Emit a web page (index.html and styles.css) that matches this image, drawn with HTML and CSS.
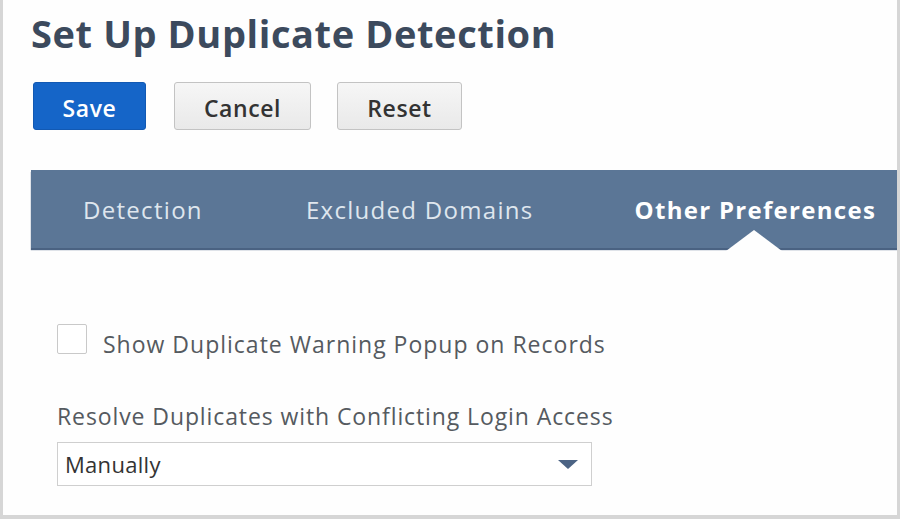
FILE: index.html
```html
<!DOCTYPE html>
<html>
<head>
<meta charset="utf-8">
<link rel="stylesheet" href="styles.css">
</head>
<body>
<div class="frame">
  <h1 class="title">Set Up Duplicate Detection</h1>
  <div class="actions">
    <button class="btn btn-primary">Save</button>
    <button class="btn btn-cancel">Cancel</button>
    <button class="btn btn-reset">Reset</button>
  </div>
  <nav class="tabs">
    <span class="tab tab-detection">Detection</span>
    <span class="tab tab-excluded">Excluded Domains</span>
    <span class="tab tab-active">Other Preferences</span>
  </nav>
  <div class="form">
    <label class="check-row">
      <span class="checkbox"></span>
      <span class="check-label">Show Duplicate Warning Popup on Records</span>
    </label>
    <div class="field-label">Resolve Duplicates with Conflicting Login Access</div>
    <div class="select">
      <span class="select-value">Manually</span>
      <span class="select-arrow"></span>
    </div>
  </div>
</div>
</body>
</html>
```
FILE: styles.css
```css
html, body {
  margin: 0;
  padding: 0;
  background: #ffffff;
}
.frame {
  box-sizing: border-box;
  width: 900px;
  height: 519px;
  border-left: 3px solid #d6d6d6;
  border-right: 3px solid #d6d6d6;
  border-bottom: 4px solid #d6d6d6;
  background: #fefefe;
  font-family: "Open Sans", "Noto Sans", sans-serif;
  overflow: hidden;
}
.title {
  margin: 0;
  padding: 9px 0 0 28px;
  font-size: 38px;
  line-height: 49px;
  font-weight: 700;
  color: #3c4a5d;
  letter-spacing: 0.6px;
}
.actions {
  display: flex;
  gap: 28px;
  padding: 24px 0 0 30px;
}
.btn {
  box-sizing: border-box;
  height: 48px;
  font-family: "Open Sans", "Noto Sans", sans-serif;
  font-size: 23px;
  font-weight: 600;
  letter-spacing: 0.6px;
  border-radius: 3px;
  padding: 3px 0 0;
}
.btn-primary {
  width: 113px;
  background: #1565c8;
  border: 1px solid #1259b3;
  color: #ffffff;
}
.btn-cancel {
  width: 137px;
  background: linear-gradient(#f6f6f6, #e9e9e9);
  border: 1px solid #c3c3c3;
  color: #333333;
}
.btn-reset {
  width: 125px;
  margin-left: -2px;
  background: linear-gradient(#f6f6f6, #e9e9e9);
  border: 1px solid #c3c3c3;
  color: #333333;
}
.tabs {
  position: relative;
  display: flex;
  align-items: center;
  height: 78px;
  margin: 40px 0 0 28px;
  background: #5b7696;
  box-shadow: 0 2px 1px #4a6282;
  font-size: 24px;
  letter-spacing: 1.3px;
}
.tabs::after {
  content: "";
  position: absolute;
  left: 695px;
  bottom: -3px;
  width: 0;
  height: 0;
  border-left: 28px solid transparent;
  border-right: 28px solid transparent;
  border-bottom: 21px solid #fefefe;
}
.tab {
  color: #dfe6ee;
}
.tab-detection {
  margin-left: 52px;
}
.tab-excluded {
  margin-left: 103px;
}
.tab-active {
  margin-left: 101px;
  color: #ffffff;
  font-weight: 700;
}
.form {
  padding: 75px 0 0 54px;
}
.check-row {
  display: flex;
  align-items: flex-start;
  gap: 16px;
}
.checkbox {
  box-sizing: border-box;
  width: 30px;
  height: 30px;
  margin-top: 1px;
  border: 1px solid #c9c9c9;
  border-radius: 2px;
  background: #ffffff;
}
.check-label {
  margin-top: 5px;
  font-size: 23px;
  letter-spacing: 1px;
  color: #555a60;
}
.field-label {
  margin-top: 40px;
  font-size: 23px;
  line-height: 32px;
  letter-spacing: 0.9px;
  color: #555a60;
}
.select {
  box-sizing: border-box;
  display: flex;
  align-items: center;
  justify-content: space-between;
  width: 535px;
  height: 44px;
  margin-top: 10px;
  padding: 0 13px 0 7px;
  border: 1px solid #cfcfcf;
  background: #ffffff;
}
.select-value {
  font-size: 22px;
  letter-spacing: 0.3px;
  color: #333333;
}
.select-arrow {
  width: 0;
  height: 0;
  border-left: 10px solid transparent;
  border-right: 10px solid transparent;
  border-top: 9px solid #4b6384;
}
```
